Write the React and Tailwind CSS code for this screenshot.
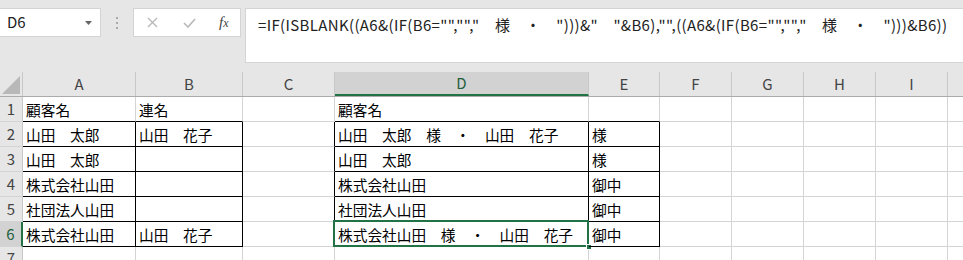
import React from 'react';

const cols = [
  { key: 'A', w: 113 },
  { key: 'B', w: 107 },
  { key: 'C', w: 92 },
  { key: 'D', w: 254 },
  { key: 'E', w: 71 },
  { key: 'F', w: 72 },
  { key: 'G', w: 72 },
  { key: 'H', w: 72 },
  { key: 'I', w: 72 },
  { key: '', w: 20 },
];

const data = {
  1: { A: '顧客名', B: '連名', D: '顧客名' },
  2: { A: '山田　太郎', B: '山田　花子', D: '山田　太郎　様　・　山田　花子', E: '様' },
  3: { A: '山田　太郎', D: '山田　太郎', E: '様' },
  4: { A: '株式会社山田', D: '株式会社山田', E: '御中' },
  5: { A: '社団法人山田', D: '社団法人山田', E: '御中' },
  6: { A: '株式会社山田', B: '山田　花子', D: '株式会社山田　様　・　山田　花子', E: '御中' },
  7: {},
};

const formula =
  '=IF(ISBLANK((A6&(IF(B6="","","　様　・　")))&"　"&B6),"",((A6&(IF(B6="","","　様　・　")))&B6))';

// black borders around A2:B6 and D2:E6
function rightBlack(col, row) {
  return row >= 2 && row <= 6 && ['A', 'B', 'C', 'D', 'E'].includes(col);
}
function bottomBlack(col, row) {
  return row >= 1 && row <= 6 && ['A', 'B', 'D', 'E'].includes(col);
}

function Cell({ col, row }) {
  const text = data[row][col.key];
  const selected = col.key === 'D' && row === 6;
  const rb = rightBlack(col.key, row);
  const bb = bottomBlack(col.key, row);
  return (
    <div
      className={`relative shrink-0 h-[25px] border-r border-b flex items-center pl-[3px] pt-[2px] whitespace-nowrap text-[14.7px] text-black ${
        rb ? 'border-r-black' : 'border-r-[#d4d4d4]'
      } ${bb ? 'border-b-black' : 'border-b-[#d4d4d4]'}`}
      style={{ width: col.w }}
    >
      {text}
      {selected && (
        <>
          <div className="absolute left-[-2px] top-[-2px] right-[-1px] bottom-[-1px] border-2 border-[#217346] pointer-events-none" />
          <div className="absolute right-[-4px] bottom-[-4px] w-[6px] h-[6px] bg-[#217346] border border-white" />
        </>
      )}
    </div>
  );
}

export default function App() {
  return (
    <div
      className="w-[963px] h-[260px] overflow-hidden bg-white select-none"
      style={{ fontFamily: '"Noto Sans CJK JP", "Noto Sans", sans-serif' }}
    >
      {/* toolbar */}
      <div className="h-[72px] bg-[#e6e6e6] flex items-start pt-[8px]">
        <div className="w-[101px] h-[29px] bg-white border border-[#d4d4d4] border-l-0 flex items-center justify-between pl-[7px] pr-[8px]">
          <span className="text-[15px] text-[#222]">D6</span>
          <svg width="7" height="4" viewBox="0 0 7 4">
            <polygon points="0,0 7,0 3.5,4" fill="#666" />
          </svg>
        </div>
        <div className="w-[32px] h-[29px] flex flex-col items-center justify-center gap-[3px]">
          <span className="w-[2px] h-[2px] bg-[#aaa]" />
          <span className="w-[2px] h-[2px] bg-[#aaa]" />
          <span className="w-[2px] h-[2px] bg-[#aaa]" />
        </div>
        <div className="w-[108px] h-[29px] bg-white border border-[#d4d4d4] flex items-center">
          <svg className="ml-[13px]" width="11" height="11" viewBox="0 0 11 11">
            <path d="M1 1L10 10M10 1L1 10" stroke="#b8b8b8" strokeWidth="1.4" />
          </svg>
          <svg className="ml-[25px]" width="13" height="10" viewBox="0 0 13 10">
            <path d="M1 5L5 9L12 1" stroke="#b8b8b8" strokeWidth="1.6" fill="none" />
          </svg>
          <span
            className="ml-[23px] text-[15px] italic text-[#444] leading-none"
            style={{ fontFamily: '"Liberation Serif", serif' }}
          >
            f<span className="text-[12px]">x</span>
          </span>
        </div>
        <div className="ml-[4px] flex-1 h-[55px] bg-white border border-[#d4d4d4] border-r-0 pl-[12px] pt-[5px] whitespace-nowrap text-[15px] tracking-[0.35px] text-[#222]">
          {formula}
        </div>
      </div>

      {/* column headers */}
      <div className="flex h-[25px] bg-[#e6e6e6] border-b border-[#ababab]">
        <div className="w-[23px] shrink-0 h-full border-r border-[#c8c8c8] flex items-end justify-end pr-[2px] pb-[2px]">
          <svg width="18" height="18" viewBox="0 0 18 18">
            <polygon points="18,0 18,18 0,18" fill="#b8b8b8" />
          </svg>
        </div>
        {cols.map((c, i) => (
          <div
            key={i}
            className={`shrink-0 h-full flex items-center justify-center text-[15px] border-r border-[#c8c8c8] ${
              c.key === 'D'
                ? 'bg-[#d2d2d2] text-[#1f5f3c] border-b-2 border-b-[#217346]'
                : 'text-[#444]'
            }`}
            style={{ width: c.w }}
          >
            {c.key}
          </div>
        ))}
      </div>

      {/* rows */}
      {[1, 2, 3, 4, 5, 6].map((r) => (
        <div key={r} className="flex">
          <div
            className={`w-[23px] shrink-0 h-[25px] border-b border-[#d4d4d4] flex items-center justify-center text-[15px] ${
              r === 6
                ? 'bg-[#d2d2d2] text-[#1f5f3c] border-r-2 border-r-[#217346]'
                : 'bg-[#e6e6e6] text-[#444] border-r border-r-[#c8c8c8]'
            }`}
          >
            {r}
          </div>
          {cols.map((c, i) => (
            <Cell key={i} col={c} row={r} />
          ))}
        </div>
      ))}
      <div className="flex h-[13px] overflow-hidden">
        <div className="w-[23px] shrink-0 h-[25px] bg-[#e6e6e6] border-r border-[#c8c8c8] flex items-start justify-center text-[15px] text-[#444] leading-[22px]">
          7
        </div>
        {cols.map((c, i) => (
          <div key={i} className="shrink-0 h-[25px] border-r border-[#d4d4d4]" style={{ width: c.w }} />
        ))}
      </div>
    </div>
  );
}
